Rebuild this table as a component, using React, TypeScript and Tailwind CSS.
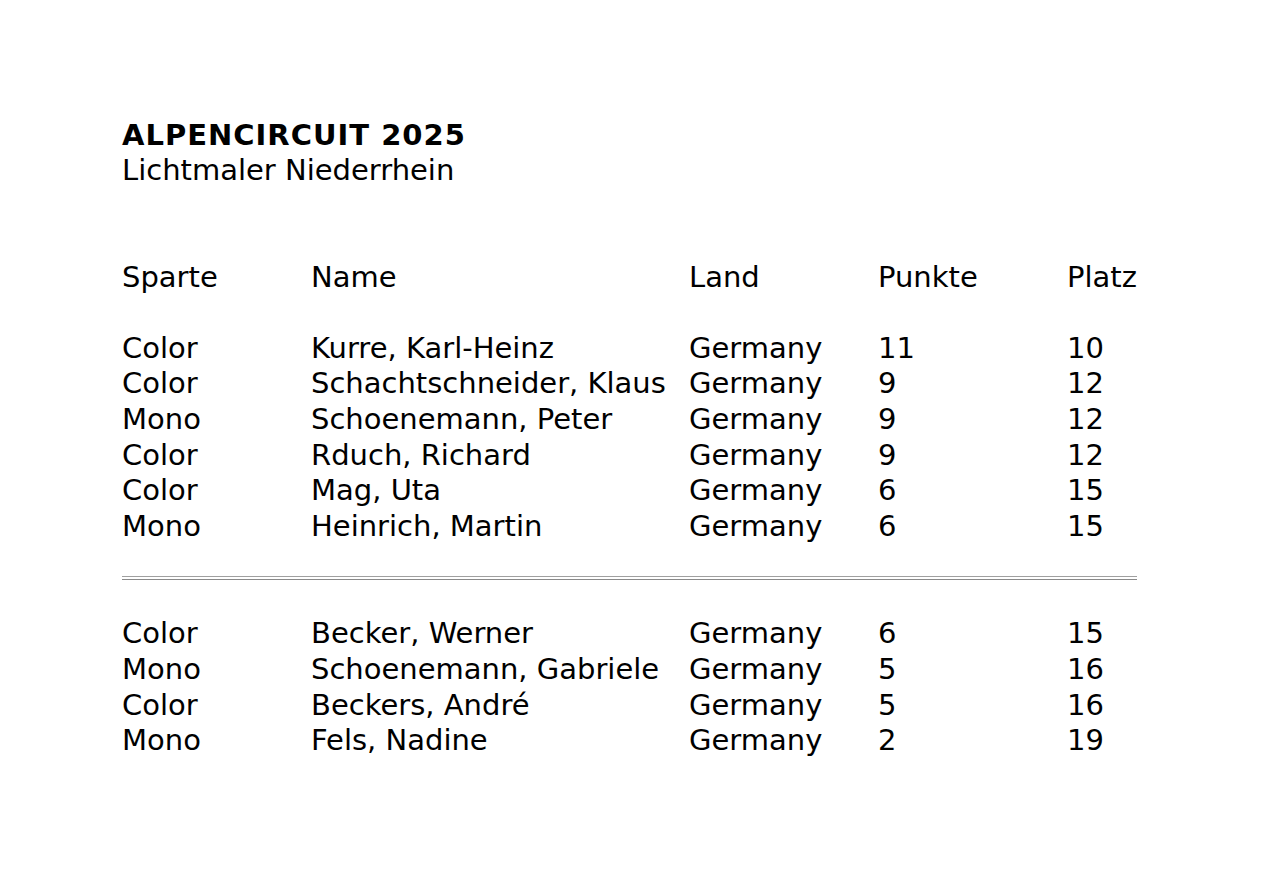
const rowsA = [
  ["Color", "Kurre, Karl-Heinz", "Germany", "11", "10"],
  ["Color", "Schachtschneider, Klaus", "Germany", "9", "12"],
  ["Mono", "Schoenemann, Peter", "Germany", "9", "12"],
  ["Color", "Rduch, Richard", "Germany", "9", "12"],
  ["Color", "Mag, Uta", "Germany", "6", "15"],
  ["Mono", "Heinrich, Martin", "Germany", "6", "15"],
];

const rowsB = [
  ["Color", "Becker, Werner", "Germany", "6", "15"],
  ["Mono", "Schoenemann, Gabriele", "Germany", "5", "16"],
  ["Color", "Beckers, André", "Germany", "5", "16"],
  ["Mono", "Fels, Nadine", "Germany", "2", "19"],
];

const Row = ({ cells }: { cells: string[] }) => {
  return (
    <div className="grid grid-cols-[189px_378px_189px_189px_1fr] whitespace-nowrap">
      {cells.map((c, i) => (
        <div key={i}>{c}</div>
      ))}
    </div>
  );
};

export default function App() {
  return (
    <div className="min-h-[887px] bg-white text-black pl-[122px] pt-[117.5px] font-['DejaVu_Sans',sans-serif] text-[29px] leading-[35.6px]">
      <div className="w-[1015px]">
        <div className="font-bold tracking-[1px]">ALPENCIRCUIT 2025</div>
        <div>Lichtmaler Niederrhein</div>

        <div className="mt-[71px]">
          <Row cells={["Sparte", "Name", "Land", "Punkte", "Platz"]} />
        </div>

        <div className="mt-[35.6px]">
          {rowsA.map((r, i) => (
            <Row key={i} cells={r} />
          ))}
        </div>

        <div className="mt-[32px] mb-[36px] h-[4px] border-t border-b border-t-[#a0a0a0] border-b-[#8a8a8a]"></div>

        <div>
          {rowsB.map((r, i) => (
            <Row key={i} cells={r} />
          ))}
        </div>
      </div>
    </div>
  );
}
